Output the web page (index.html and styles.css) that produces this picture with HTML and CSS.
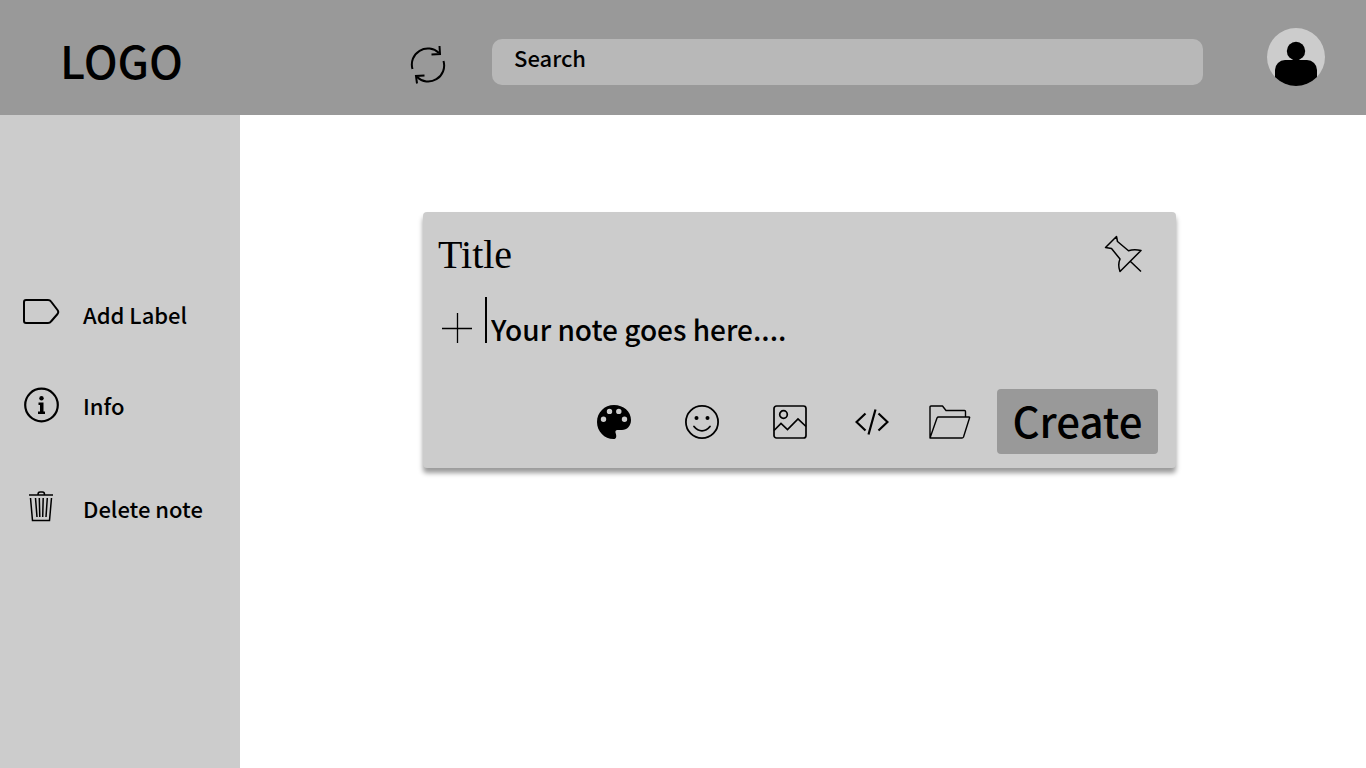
FILE: index.html
```
<!DOCTYPE html>
<html lang="en">
<head>
<meta charset="utf-8">
<meta name="viewport" content="width=device-width, initial-scale=1">
<title>Notes</title>
<link rel="stylesheet" href="styles.css">
</head>
<body>
<header class="topbar">
  <div class="logo">LOGO</div>
  <button class="icon-button refresh" type="button" aria-label="Refresh">
    <svg width="36" height="40" viewBox="0 0 36 40" fill="none" stroke="currentColor" stroke-width="2"><path d="M2.500 24A16 16 0 0 1 29 8M33.500 16A16 16 0 0 1 7 32"/><path d="M29.500 1L30 9L21.500 9.500M7 38.500L6 31L14.500 30.500"/></svg>
  </button>
  <input class="search" type="search" aria-label="Search" placeholder="Search">
  <button class="icon-button" type="button" aria-label="Account">
    <svg width="58" height="58" viewBox="0 0 58 58"><defs><clipPath id="avatar-clip"><circle cx="29" cy="29" r="29"/></clipPath></defs><circle cx="29" cy="29" r="29" fill="#ccc"/><g clip-path="url(#avatar-clip)"><circle cx="29" cy="23" r="9.200"/><rect x="8" y="32" width="42" height="34" rx="10"/></g></svg>
  </button>
</header>
<div class="layout">
  <nav class="sidebar" aria-label="Note actions">
    <a class="side-link" href="#label">
      <svg class="side-icon" width="38" height="38" viewBox="0 0 38 38" fill="none" stroke="currentColor" stroke-width="2" stroke-linejoin="round"><path d="M4 5H26Q28 5 29 6.500L35.500 15Q37 17 35.500 19L29 26.500Q28 28 26 28H4Q2 28 2 26V7Q2 5 4 5Z"/></svg>
      <span>Add Label</span>
    </a>
    <a class="side-link info" href="#info">
      <svg class="side-icon" width="38" height="38" viewBox="0 0 38 38"><circle cx="19.500" cy="19" r="16.300" fill="none" stroke="currentColor" stroke-width="2.200"/><circle cx="19.500" cy="12.200" r="2.200"/><path d="M16.500 16.500H21.500V25.500H23V28H16V25.500H18V19H16.500Z"/></svg>
      <span>Info</span>
    </a>
    <a class="side-link" href="#delete">
      <svg class="side-icon" width="38" height="38" viewBox="0 0 38 38" fill="none" stroke="currentColor" stroke-width="1.500"><path d="M7 6H31M16 5.500Q16 3 18 3H20.500Q22.500 3 22.500 5.500M8.500 9L10.500 31.500H27.500L29.500 9M13.500 9L15 28M17.300 9L17.800 28M21.200 9L20.700 28M25.300 9L24 28"/></svg>
      <span>Delete note</span>
    </a>
  </nav>
  <main class="content">
    <form class="note">
      <div class="note-head">
        <input class="note-title" type="text" aria-label="Title" placeholder="Title">
        <button class="icon-button" type="button" aria-label="Pin note">
          <svg width="38" height="38" viewBox="0 0 38 38" fill="none" stroke="currentColor" stroke-width="1.500" stroke-linejoin="round"><path d="M12.500 1.500L13.500 6.500L24.500 15.800Q30 13.800 37 15.500L16 36.500Q13.500 30 16 24L7.500 13.500L1.500 12.500ZM26.500 26.500L37 36.500"/></svg>
        </button>
      </div>
      <div class="note-body">
        <button class="icon-button add" type="button" aria-label="Add item">
          <svg width="30" height="30" viewBox="0 0 30 30" fill="none" stroke="currentColor" stroke-width="1.300"><path d="M0 15.500H30M15.500 0V30"/></svg>
        </button>
        <span class="caret"></span>
        <input class="note-text" type="text" aria-label="Note" placeholder="Your note goes here....">
      </div>
      <div class="note-foot">
        <div class="tools">
          <button class="icon-button" type="button" aria-label="Background colour">
            <svg width="34" height="34" viewBox="0 0 34 34"><path fill-rule="evenodd" d="M17 0C26.500 0 34 6.500 34 15C34 21 30 25 25 25H20.500C18.500 25 18 26.500 18.700 28.200C19.500 30.500 20 34 16.500 34C7.500 34 0 26.500 0 17S7.500 0 17 0ZM12.500 3.700a2.700 2.700 0 1 0 0 5.400a2.700 2.700 0 1 0 0-5.400ZM21.800 3.700a2.700 2.700 0 1 0 0 5.400a2.700 2.700 0 1 0 0-5.400ZM6.500 11.500a2.700 2.700 0 1 0 0 5.400a2.700 2.700 0 1 0 0-5.400ZM27.500 11.500a2.700 2.700 0 1 0 0 5.400a2.700 2.700 0 1 0 0-5.400Z"/></svg>
          </button>
          <button class="icon-button" type="button" aria-label="Emoji">
            <svg width="34" height="34" viewBox="0 0 34 34"><circle cx="17" cy="17" r="16.100" fill="none" stroke="currentColor" stroke-width="1.800"/><circle cx="11.500" cy="13" r="2"/><circle cx="22.500" cy="13" r="2"/><path d="M9 21.500Q12.500 25.800 17 25.800T25 21.500" fill="none" stroke="currentColor" stroke-width="1.800" stroke-linecap="round"/></svg>
          </button>
          <button class="icon-button" type="button" aria-label="Add image">
            <svg width="34" height="34" viewBox="0 0 34 34" fill="none" stroke="currentColor" stroke-width="1.700"><rect x="1" y="1" width="32" height="32" rx="2.500"/><circle cx="10.500" cy="9.500" r="3.800"/><path d="M1 25.500L8 18.500L14.500 24.500L25 14L33 21.500"/></svg>
          </button>
          <button class="icon-button" type="button" aria-label="Add code">
            <svg width="34" height="34" viewBox="0 0 34 34" fill="none" stroke="currentColor" stroke-width="2.200"><path d="M10.500 8.500L1.500 17L10.500 25.500M23.500 8.500L32.500 17L23.500 25.500M20.500 4.500L13.500 29.500"/></svg>
          </button>
          <button class="icon-button" type="button" aria-label="Add to folder">
            <svg width="42" height="34" viewBox="0 0 42 34" fill="none" stroke="currentColor" stroke-width="1.400" stroke-linejoin="round"><path d="M1 33V2Q1 1 2 1H13.500L17 5.500H35.500Q36.500 5.500 36.500 6.500V12M1 33L8 13Q8.500 12 9.500 12H40Q41 12 40.500 13L34.500 32Q34 33 33 33Z"/></svg>
          </button>
        </div>
        <button class="create" type="submit">Create</button>
      </div>
    </form>
  </main>
</div>
</body>
</html>
```
FILE: styles.css
```
* { box-sizing: border-box; }

body {
  display: flex;
  flex-direction: column;
  min-height: 100vh;
  margin: 0;
  background: #fff;
  color: #000;
  font-family: "Noto Sans CJK SC", "Open Sans", sans-serif;
  font-size: 22px;
  font-weight: 500;
  line-height: 32px;
}

svg { display: block; }

button, input {
  padding: 0;
  border: 0;
  background: none;
  color: inherit;
  font: inherit;
}

input { min-width: 0; }
input::placeholder { color: #000; opacity: 1; }

.icon-button {
  flex: none;
  cursor: pointer;
}

.topbar {
  display: flex;
  align-items: flex-start;
  padding: 28px 41px 23px 60px;
  background: #999;
}

.logo {
  width: 350px;
  font-size: 45px;
  line-height: 64px;
}

.refresh { margin-top: 17px; }

.search {
  flex: 1;
  height: 46px;
  margin: 11px 64px 0 46px;
  padding: 0 22px 10px;
  border-radius: 10px;
  background: #b8b8b8;
}

.layout {
  display: flex;
  flex: 1;
}

.sidebar {
  display: flex;
  flex-direction: column;
  gap: 53px;
  width: 240px;
  padding: 180px 22px 0;
  background: #ccc;
}

.side-link {
  display: flex;
  align-items: center;
  gap: 23px;
  color: inherit;
  text-decoration: none;
  white-space: nowrap;
}

.side-link.info { margin-bottom: 12px; }

.content {
  flex: 1;
  padding: 97px 190px 40px 183px;
}

.note {
  padding: 18px 18px 14px 15px;
  border-radius: 4px;
  background: #ccc;
  box-shadow: 0 5px 5px rgba(0, 0, 0, 0.4);
}

.note-head {
  display: flex;
  align-items: center;
  justify-content: space-between;
  padding-right: 16px;
}

.note-title {
  flex: 1;
  height: 48px;
  font-family: "Liberation Serif", serif;
  font-size: 40px;
  font-weight: 400;
}

.note-body {
  display: flex;
  align-items: flex-start;
  margin-top: 19px;
  padding-left: 4px;
}

.add { margin: 16px 13px 0 0; }

.caret {
  width: 2px;
  height: 46px;
  background: #000;
}

.note-text {
  flex: 1;
  height: 44px;
  margin-top: 10px;
  padding-left: 4px;
  font-size: 28px;
}

.note-foot {
  display: flex;
  align-items: center;
  justify-content: flex-end;
  gap: 26px;
  margin-top: 38px;
}

.tools {
  display: flex;
  gap: 54px;
}

.tools .icon-button:nth-child(n + 4) { margin-left: -6px; }
.tools .icon-button:last-child { margin-left: -14px; }

.create {
  width: 161px;
  height: 65px;
  padding-bottom: 4px;
  border-radius: 4px;
  background: #999;
  font-size: 42px;
  cursor: pointer;
}
```
